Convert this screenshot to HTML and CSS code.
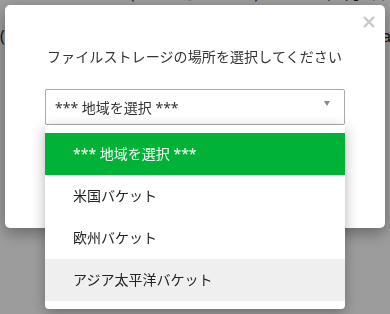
FILE: index.html
```html
<!DOCTYPE html>
<html lang="ja">
<head>
    <meta charset="UTF-8">
    <meta name="viewport" content="width=device-width, initial-scale=1.0">
    <title>ファイルストレージ</title>
    <link rel="stylesheet" href="styles.css">
</head>
<body>
    <div class="page">
        <p class="page-line first">us Administrator (admin@domain) は 2025年1月8日</p>
        <p class="page-line second">(クラウドストレージの設定を確認してください。Data</p>
    </div>

    <div class="overlay">
        <div class="modal">
            <span class="close">
                <svg width="12" height="12" viewBox="0 0 12 12">
                    <path d="M1 1 L11 11 M11 1 L1 11" stroke="#c8c8c8" stroke-width="2.4" fill="none"/>
                </svg>
            </span>
            <p class="modal-title">ファイルストレージの場所を選択してください</p>
            <div class="select-wrap">
                <div class="select">
                    <span>*** 地域を選択 ***</span>
                    <span class="arrow"></span>
                </div>
                <ul class="options">
                    <li class="option selected">*** 地域を選択 ***</li>
                    <li class="option">米国バケット</li>
                    <li class="option">欧州バケット</li>
                    <li class="option hover">アジア太平洋バケット</li>
                </ul>
            </div>
        </div>
    </div>
</body>
</html>
```

FILE: styles.css
```css
body {
    margin: 0;
    font-family: "Noto Sans", "Noto Sans CJK JP", sans-serif;
    background-color: #fff;
    color: #222;
    overflow: hidden;
    height: 314px;
}
.page {
    margin-top: -17px;
}
.page-line {
    margin: 0;
    font-size: 16px;
    line-height: 20px;
    white-space: nowrap;
}
.page-line.second {
    margin-top: 23px;
}
.overlay {
    position: fixed;
    top: 0;
    left: 0;
    right: 0;
    bottom: 0;
    background-color: rgba(0, 0, 0, 0.39);
}
.modal {
    position: absolute;
    top: 5px;
    left: 5px;
    width: 380px;
    height: 223px;
    box-sizing: border-box;
    padding: 42px 40px 0 40px;
    background-color: #fff;
    border-radius: 5px;
    box-shadow: 0 5px 16px rgba(0, 0, 0, 0.35);
}
.close {
    position: absolute;
    top: 11px;
    right: 10px;
    line-height: 0;
}
.modal-title {
    margin: 0 0 0 2px;
    font-size: 14px;
    line-height: 20px;
    color: #333;
    letter-spacing: 0.1px;
}
.select-wrap {
    position: relative;
    margin-top: 22px;
}
.select {
    display: flex;
    align-items: center;
    justify-content: space-between;
    height: 36px;
    box-sizing: border-box;
    padding: 0 14px 0 9px;
    border: 1px solid #aaa;
    border-radius: 2px;
    font-size: 14px;
    color: #333;
}
.arrow {
    width: 0;
    height: 0;
    margin-top: -7px;
    border-left: 3px solid transparent;
    border-right: 3px solid transparent;
    border-top: 5px solid #888;
}
.options {
    position: absolute;
    top: 36px;
    left: 0;
    width: 300px;
    margin: 0;
    padding: 8px 0;
    list-style: none;
    background-color: #fff;
    border-radius: 0 0 4px 4px;
    box-shadow: 0 4px 14px rgba(0, 0, 0, 0.3);
}
.option {
    height: 42px;
    line-height: 42px;
    padding-left: 28px;
    font-size: 14px;
    color: #222;
}
.option.selected {
    background-color: #00b336;
    color: #fff;
}
.option.hover {
    background-color: #efefef;
}
```
